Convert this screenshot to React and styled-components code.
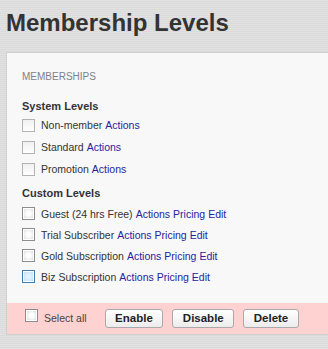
import React from "react";
import styled, { createGlobalStyle } from "styled-components";

const GlobalStyle = createGlobalStyle`
  html, body {
    margin: 0;
    padding: 0;
  }
  body {
    background-color: #dedede;
    background-image: repeating-linear-gradient(
      0deg,
      rgba(255, 255, 255, 0.12) 0px,
      rgba(255, 255, 255, 0.12) 1px,
      rgba(0, 0, 0, 0.02) 1px,
      rgba(0, 0, 0, 0.02) 2px
    );
    font-family: "Liberation Sans", Arial, sans-serif;
    overflow: hidden;
  }
`;

const Page = styled.div`
  width: 328px;
  height: 349px;
  padding-top: 9px;
  box-sizing: border-box;
  overflow: hidden;
`;

const Title = styled.h1`
  margin: 0 0 15px 6px;
  font-size: 24px;
  line-height: 28px;
  font-weight: bold;
  color: #333;
`;

const Panel = styled.div`
  margin-left: 6px;
  width: 340px;
  background: #f8f8f8;
  border: 1px solid #cfcfcf;
`;

const Body = styled.div`
  padding: 17px 0 16px 15px;
`;

const SectionLabel = styled.div`
  font-size: 10px;
  line-height: 14px;
  color: #7d818a;
  text-transform: uppercase;
  margin-bottom: 15px;
`;

const GroupTitle = styled.div`
  font-size: 11px;
  line-height: 14px;
  font-weight: bold;
  color: #333;
  margin-bottom: ${(p) => p.$gap}px;
`;

const Row = styled.div`
  display: flex;
  align-items: center;
  height: ${(p) => p.$h}px;
  font-size: 10.5px;
  color: #333;
`;

const Box = styled.span`
  box-sizing: border-box;
  width: 13px;
  height: 13px;
  margin-right: 6px;
  flex: none;
  border: 1px solid
    ${(p) =>
      p.$kind === "hover" ? "#3d7db0" : p.$kind === "dark" ? "#8c8c8c" : "#b3b3b3"};
  background: ${(p) =>
    p.$kind === "hover"
      ? "radial-gradient(circle, #e4f2fd 20%, #b9dcf6 100%)"
      : p.$kind === "dark"
      ? "radial-gradient(circle, #ffffff 25%, #d6d6d6 100%)"
      : "linear-gradient(#f0f0f0, #ffffff)"};
  box-shadow: ${(p) => (p.$kind === "light" ? "none" : "inset 0 0 0 1px #ffffff")};
`;

const Link = styled.a`
  color: #2424a0;
  text-decoration: none;
  margin-left: 3px;
  cursor: pointer;
`;

const GroupGap = styled.div`
  height: 6px;
`;

const Footer = styled.div`
  display: flex;
  align-items: flex-start;
  height: 31px;
  padding: 6px 0 0 18px;
  box-sizing: border-box;
  background: #ffd2d2;
`;

const SelectAll = styled.label`
  display: flex;
  align-items: flex-start;
  font-size: 10.5px;
  color: #444;
  margin-right: 18px;
  line-height: 13px;

  span + span {
    margin-top: 3px;
  }
`;

const Button = styled.button`
  height: 19px;
  padding: 0 9.5px;
  margin-right: 9px;
  border: 1px solid #aaaaaa;
  border-radius: 3px;
  background: linear-gradient(#ffffff, #ececec);
  font-family: "Liberation Sans", Arial, sans-serif;
  font-size: 11.5px;
  font-weight: bold;
  color: #222;
  line-height: 17px;
`;

const systemLevels = ["Non-member", "Standard", "Promotion"];
const customLevels = [
  { name: "Guest (24 hrs Free)", kind: "dark" },
  { name: "Trial Subscriber", kind: "dark" },
  { name: "Gold Subscription", kind: "dark" },
  { name: "Biz Subscription", kind: "hover" },
];

export default function App() {
  return (
    <Page>
      <GlobalStyle />
      <Title>Membership Levels</Title>
      <Panel>
        <Body>
          <SectionLabel>Memberships</SectionLabel>
          <GroupTitle $gap={1}>System Levels</GroupTitle>
          {systemLevels.map((name) => (
            <Row key={name} $h={22}>
              <Box $kind="light" />
              {name}
              <Link>Actions</Link>
            </Row>
          ))}
          <GroupGap />
          <GroupTitle $gap={3}>Custom Levels</GroupTitle>
          {customLevels.map((lvl) => (
            <Row key={lvl.name} $h={21}>
              <Box $kind={lvl.kind} />
              {lvl.name}
              <Link>Actions</Link>
              <Link>Pricing</Link>
              <Link>Edit</Link>
            </Row>
          ))}
        </Body>
        <Footer>
          <SelectAll>
            <Box $kind="dark" />
            <span>Select all</span>
          </SelectAll>
          <Button>Enable</Button>
          <Button>Disable</Button>
          <Button>Delete</Button>
        </Footer>
      </Panel>
    </Page>
  );
}
